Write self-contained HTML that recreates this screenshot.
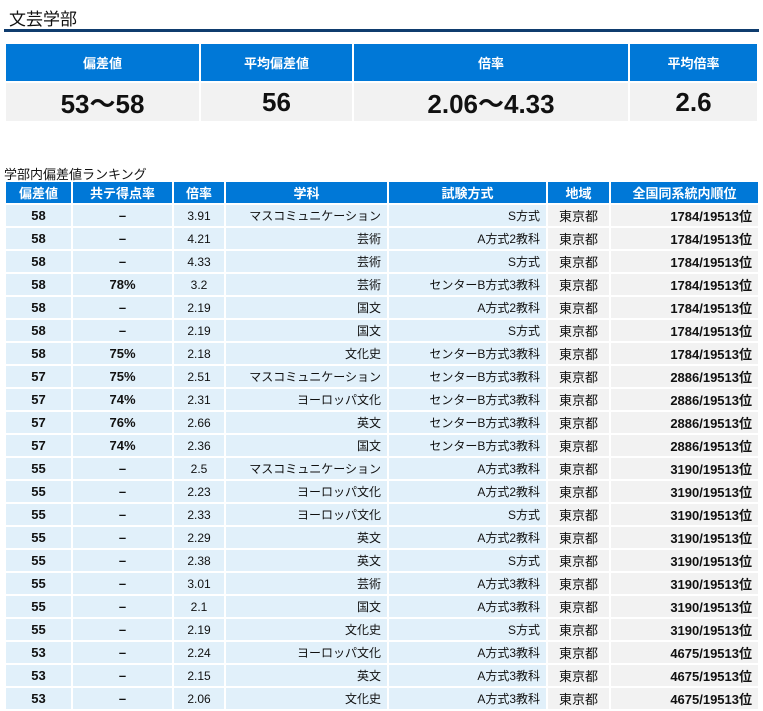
<!DOCTYPE html>
<html><head><meta charset="utf-8"><style>
body{margin:0;background:#fff;font-family:"Liberation Sans","Noto Sans CJK JP",sans-serif;width:763px;height:709px;overflow:hidden;position:relative}
h1{position:absolute;left:9px;top:5px;margin:0;font-size:17px;font-weight:normal;color:#111}
.line{position:absolute;left:4px;top:29px;width:755px;height:3px;background:#0f3c6e}
table{border-collapse:separate;border-spacing:2px;position:absolute;table-layout:fixed}
.sum{left:4px;top:42px}
.sum th{background:#0078d7;color:#fff;height:37px;font-size:13px;padding:0}
.sum td{background:#f2f2f2;height:38px;font-size:26px;font-weight:bold;text-align:center;padding:0;color:#111}
.cap{position:absolute;left:4px;top:164px;font-size:13px;color:#111}
.rk{left:4px;top:180px;font-size:12px}
.rk th{background:#0078d7;color:#fff;height:21px;padding:0;font-size:13px}
.rk td{height:21px;padding:0 6px;background:#e1f0fa;color:#111;white-space:nowrap;overflow:hidden}
.rk td:nth-child(1),.rk td:nth-child(2),.rk td:nth-child(3),.rk td:nth-child(6){text-align:center}
.rk td:nth-child(1),.rk td:nth-child(2),.rk td:nth-child(7){font-weight:bold;font-size:13px}
.rk td:nth-child(4),.rk td:nth-child(5),.rk td:nth-child(7){text-align:right}
.rk td:nth-child(6){font-size:13px}
.rk td:nth-child(6),.rk td:nth-child(7){background:#f2f2f2}
.d{font-weight:normal}
</style></head><body>
<h1>文芸学部</h1><div class="line"></div>
<table class="sum"><colgroup><col style="width:193px"><col style="width:151px"><col style="width:274px"><col style="width:127px"></colgroup>
<tr><th>偏差値</th><th>平均偏差値</th><th>倍率</th><th>平均倍率</th></tr>
<tr><td>53～58</td><td>56</td><td>2.06～4.33</td><td>2.6</td></tr></table>
<div class="cap">学部内偏差値ランキング</div>
<table class="rk"><colgroup><col style="width:65px"><col style="width:99px"><col style="width:50px"><col style="width:161px"><col style="width:157px"><col style="width:61px"><col style="width:147px"></colgroup>
<tr><th>偏差値</th><th>共テ得点率</th><th>倍率</th><th>学科</th><th>試験方式</th><th>地域</th><th>全国同系統内順位</th></tr>
<tr><td>58</td><td class="d">–</td><td>3.91</td><td>マスコミュニケーション</td><td>S方式</td><td>東京都</td><td>1784/19513位</td></tr>
<tr><td>58</td><td class="d">–</td><td>4.21</td><td>芸術</td><td>A方式2教科</td><td>東京都</td><td>1784/19513位</td></tr>
<tr><td>58</td><td class="d">–</td><td>4.33</td><td>芸術</td><td>S方式</td><td>東京都</td><td>1784/19513位</td></tr>
<tr><td>58</td><td>78%</td><td>3.2</td><td>芸術</td><td>センターB方式3教科</td><td>東京都</td><td>1784/19513位</td></tr>
<tr><td>58</td><td class="d">–</td><td>2.19</td><td>国文</td><td>A方式2教科</td><td>東京都</td><td>1784/19513位</td></tr>
<tr><td>58</td><td class="d">–</td><td>2.19</td><td>国文</td><td>S方式</td><td>東京都</td><td>1784/19513位</td></tr>
<tr><td>58</td><td>75%</td><td>2.18</td><td>文化史</td><td>センターB方式3教科</td><td>東京都</td><td>1784/19513位</td></tr>
<tr><td>57</td><td>75%</td><td>2.51</td><td>マスコミュニケーション</td><td>センターB方式3教科</td><td>東京都</td><td>2886/19513位</td></tr>
<tr><td>57</td><td>74%</td><td>2.31</td><td>ヨーロッパ文化</td><td>センターB方式3教科</td><td>東京都</td><td>2886/19513位</td></tr>
<tr><td>57</td><td>76%</td><td>2.66</td><td>英文</td><td>センターB方式3教科</td><td>東京都</td><td>2886/19513位</td></tr>
<tr><td>57</td><td>74%</td><td>2.36</td><td>国文</td><td>センターB方式3教科</td><td>東京都</td><td>2886/19513位</td></tr>
<tr><td>55</td><td class="d">–</td><td>2.5</td><td>マスコミュニケーション</td><td>A方式3教科</td><td>東京都</td><td>3190/19513位</td></tr>
<tr><td>55</td><td class="d">–</td><td>2.23</td><td>ヨーロッパ文化</td><td>A方式2教科</td><td>東京都</td><td>3190/19513位</td></tr>
<tr><td>55</td><td class="d">–</td><td>2.33</td><td>ヨーロッパ文化</td><td>S方式</td><td>東京都</td><td>3190/19513位</td></tr>
<tr><td>55</td><td class="d">–</td><td>2.29</td><td>英文</td><td>A方式2教科</td><td>東京都</td><td>3190/19513位</td></tr>
<tr><td>55</td><td class="d">–</td><td>2.38</td><td>英文</td><td>S方式</td><td>東京都</td><td>3190/19513位</td></tr>
<tr><td>55</td><td class="d">–</td><td>3.01</td><td>芸術</td><td>A方式3教科</td><td>東京都</td><td>3190/19513位</td></tr>
<tr><td>55</td><td class="d">–</td><td>2.1</td><td>国文</td><td>A方式3教科</td><td>東京都</td><td>3190/19513位</td></tr>
<tr><td>55</td><td class="d">–</td><td>2.19</td><td>文化史</td><td>S方式</td><td>東京都</td><td>3190/19513位</td></tr>
<tr><td>53</td><td class="d">–</td><td>2.24</td><td>ヨーロッパ文化</td><td>A方式3教科</td><td>東京都</td><td>4675/19513位</td></tr>
<tr><td>53</td><td class="d">–</td><td>2.15</td><td>英文</td><td>A方式3教科</td><td>東京都</td><td>4675/19513位</td></tr>
<tr><td>53</td><td class="d">–</td><td>2.06</td><td>文化史</td><td>A方式3教科</td><td>東京都</td><td>4675/19513位</td></tr>
</table>
</body></html>
